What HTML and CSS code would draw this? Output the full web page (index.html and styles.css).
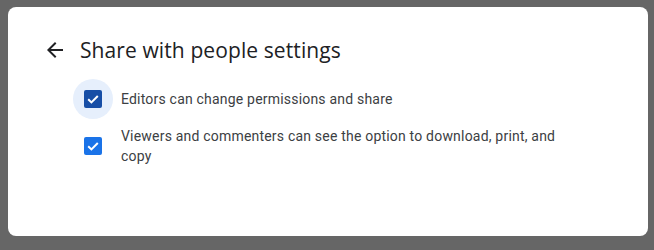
FILE: index.html
```html
<!DOCTYPE html>
<html>
<head>
<meta charset="utf-8">
<link rel="stylesheet" href="styles.css">
</head>
<body>
<div class="card">
  <div class="header">
    <svg class="back" viewBox="0 0 24 24" width="24" height="24"><path d="M20 11H7.83l5.59-5.59L12 4l-8 8 8 8 1.41-1.41L7.83 13H20v-2z" fill="#202124"/></svg>
    <h1 class="title">Share with people settings</h1>
  </div>
  <div class="options">
    <div class="option">
      <div class="box-wrap focused">
        <span class="box dark"><svg viewBox="0 0 18 18" width="18" height="18"><polyline points="4.2,9.3 7.4,12.4 13.8,6" fill="none" stroke="#fff" stroke-width="2"/></svg></span>
      </div>
      <div class="label">Editors can change permissions and share</div>
    </div>
    <div class="option">
      <div class="box-wrap">
        <span class="box"><svg viewBox="0 0 18 18" width="18" height="18"><polyline points="4.2,9.3 7.4,12.4 13.8,6" fill="none" stroke="#fff" stroke-width="2"/></svg></span>
      </div>
      <div class="label">Viewers and commenters can see the option to download, print, and copy</div>
    </div>
  </div>
</div>
</body>
</html>
```
FILE: styles.css
```css
html, body { margin: 0; padding: 0; }
body {
  background: #666666;
  padding: 7px 6px 14px 8px;
  width: 654px;
  height: 250px;
  box-sizing: border-box;
}
.card {
  width: 640px;
  height: 229px;
  background: #fff;
  border-radius: 8px;
  box-sizing: border-box;
  padding: 31px 0 0 35px;
}
.header {
  display: flex;
  align-items: center;
  height: 24px;
  gap: 13px;
}
.back { display: block; flex: none; }
.title {
  margin: 0;
  font-family: "Open Sans", "Noto Sans", sans-serif;
  font-weight: 400;
  font-size: 21px;
  line-height: 24px;
  color: #202124;
  letter-spacing: 0.1px;
}
.options {
  margin-top: 17px;
  padding-left: 30px;
  display: flex;
  flex-direction: column;
  gap: 7px;
}
.option {
  display: flex;
  align-items: center;
  gap: 8px;
}
.box-wrap {
  width: 40px;
  height: 40px;
  border-radius: 50%;
  display: flex;
  align-items: center;
  justify-content: center;
  flex: none;
}
.box-wrap.focused { background: #e6effc; }
.box {
  width: 18px;
  height: 18px;
  border-radius: 2px;
  background: #1a73e8;
  display: block;
}
.box.dark { background: #174ea6; }
.box svg { display: block; }
.label {
  font-family: Roboto, "Liberation Sans", sans-serif;
  font-size: 14px;
  line-height: 20px;
  color: #3c4043;
  width: 445px;
  letter-spacing: 0.2px;
}
```
